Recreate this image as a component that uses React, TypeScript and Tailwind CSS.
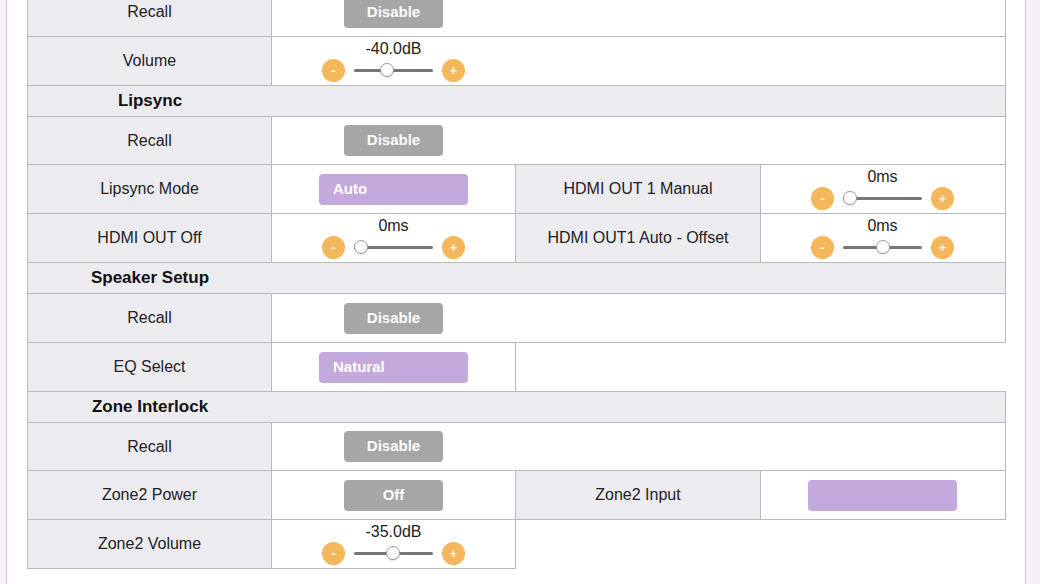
import React from "react";

type SliderProps = { value: string; pos: number };

const BORDER = "border border-[#b9b9b9]";

function Label({ text }: { text: string }) {
  return (
    <td className={`${BORDER} bg-[#ecebf0] text-center align-middle text-[16px] text-[#222]`}>
      {text}
    </td>
  );
}

function GrayButton({ text }: { text: string }) {
  return (
    <div className="flex h-[31px] w-[99px] items-center justify-center rounded-[4px] bg-[#a6a6a6] text-[15px] font-bold text-[#fdfdfd]">
      {text}
    </div>
  );
}

function PurpleSelect({ text }: { text?: string }) {
  return (
    <div className="flex h-[31px] w-[149px] items-center rounded-[4px] bg-[#c4a9dc] pl-[14px] text-[15px] font-bold text-white">
      {text}
    </div>
  );
}

function RoundBtn({ sign }: { sign: string }) {
  return (
    <div className="flex h-[23px] w-[23px] items-center justify-center rounded-full bg-[#f5b75c] text-[13px] font-bold leading-none text-white">
      {sign}
    </div>
  );
}

function Slider({ value, pos }: SliderProps) {
  return (
    <div className="flex flex-col items-center">
      <div className="text-[16px] leading-[16px] text-[#222]">{value}</div>
      <div className="mt-[2px] flex items-center gap-[9px]">
        <RoundBtn sign="-" />
        <div className="relative h-[14px] w-[79px]">
          <div className="absolute left-0 right-0 top-[6px] h-[3px] rounded-full bg-[#777]" />
          <div
            className="absolute top-0 h-[14px] w-[14px] rounded-full border border-[#9a9a9a] bg-white shadow-sm"
            style={{ left: `calc(${pos} * (100% - 14px))` }}
          />
        </div>
        <RoundBtn sign="+" />
      </div>
    </div>
  );
}

function Value({ children, span = 1 }: { children?: React.ReactNode; span?: number }) {
  return (
    <td colSpan={span} className={`${BORDER} bg-white align-middle`}>
      <div className="flex w-[243px] justify-center">{children}</div>
    </td>
  );
}

function Empty() {
  return <td colSpan={2} className="border-0 bg-white" />;
}

function Row({ children, short }: { children: React.ReactNode; short?: boolean }) {
  return <tr className={short ? "h-[48px]" : "h-[49px]"}>{children}</tr>;
}

function Header({ title }: { title: string }) {
  return (
    <tr className="h-[31px]">
      <td colSpan={4} className={`${BORDER} bg-[#ecebf0] align-middle`}>
        <div className="w-[244px] text-center text-[17px] font-bold text-[#111]">{title}</div>
      </td>
    </tr>
  );
}

export default function App() {
  return (
    <div className="h-[584px] w-[1040px] overflow-hidden bg-[#f4f0f5] font-['Liberation_Sans',Arial,sans-serif]">
      <div className="ml-[6px] flow-root h-full w-[1020px] overflow-hidden border-x border-[#c6c3c8] bg-white px-[20px]">
        <table className="-mt-[13px] w-[978px] table-fixed border-collapse">
          <colgroup>
            <col className="w-[244px]" />
            <col className="w-[244px]" />
            <col className="w-[245px]" />
            <col className="w-[245px]" />
          </colgroup>
          <tbody>
            <Row>
              <Label text="Recall" />
              <Value span={3}>
                <GrayButton text="Disable" />
              </Value>
            </Row>
            <Row>
              <Label text="Volume" />
              <Value span={3}>
                <Slider value="-40.0dB" pos={0.4} />
              </Value>
            </Row>

            <Header title="Lipsync" />
            <Row short>
              <Label text="Recall" />
              <Value span={3}>
                <GrayButton text="Disable" />
              </Value>
            </Row>
            <Row>
              <Label text="Lipsync Mode" />
              <Value>
                <PurpleSelect text="Auto" />
              </Value>
              <Label text="HDMI OUT 1 Manual" />
              <Value>
                <Slider value="0ms" pos={0} />
              </Value>
            </Row>
            <Row>
              <Label text="HDMI OUT Off" />
              <Value>
                <Slider value="0ms" pos={0} />
              </Value>
              <Label text="HDMI OUT1 Auto - Offset" />
              <Value>
                <Slider value="0ms" pos={0.5} />
              </Value>
            </Row>

            <Header title="Speaker Setup" />
            <Row>
              <Label text="Recall" />
              <Value span={3}>
                <GrayButton text="Disable" />
              </Value>
            </Row>
            <Row>
              <Label text="EQ Select" />
              <Value>
                <PurpleSelect text="Natural" />
              </Value>
              <Empty />
            </Row>

            <Header title="Zone Interlock" />
            <Row short>
              <Label text="Recall" />
              <Value span={3}>
                <GrayButton text="Disable" />
              </Value>
            </Row>
            <Row>
              <Label text="Zone2 Power" />
              <Value>
                <GrayButton text="Off" />
              </Value>
              <Label text="Zone2 Input" />
              <Value>
                <PurpleSelect />
              </Value>
            </Row>
            <Row>
              <Label text="Zone2 Volume" />
              <Value>
                <Slider value="-35.0dB" pos={0.49} />
              </Value>
              <Empty />
            </Row>
          </tbody>
        </table>
      </div>
    </div>
  );
}
